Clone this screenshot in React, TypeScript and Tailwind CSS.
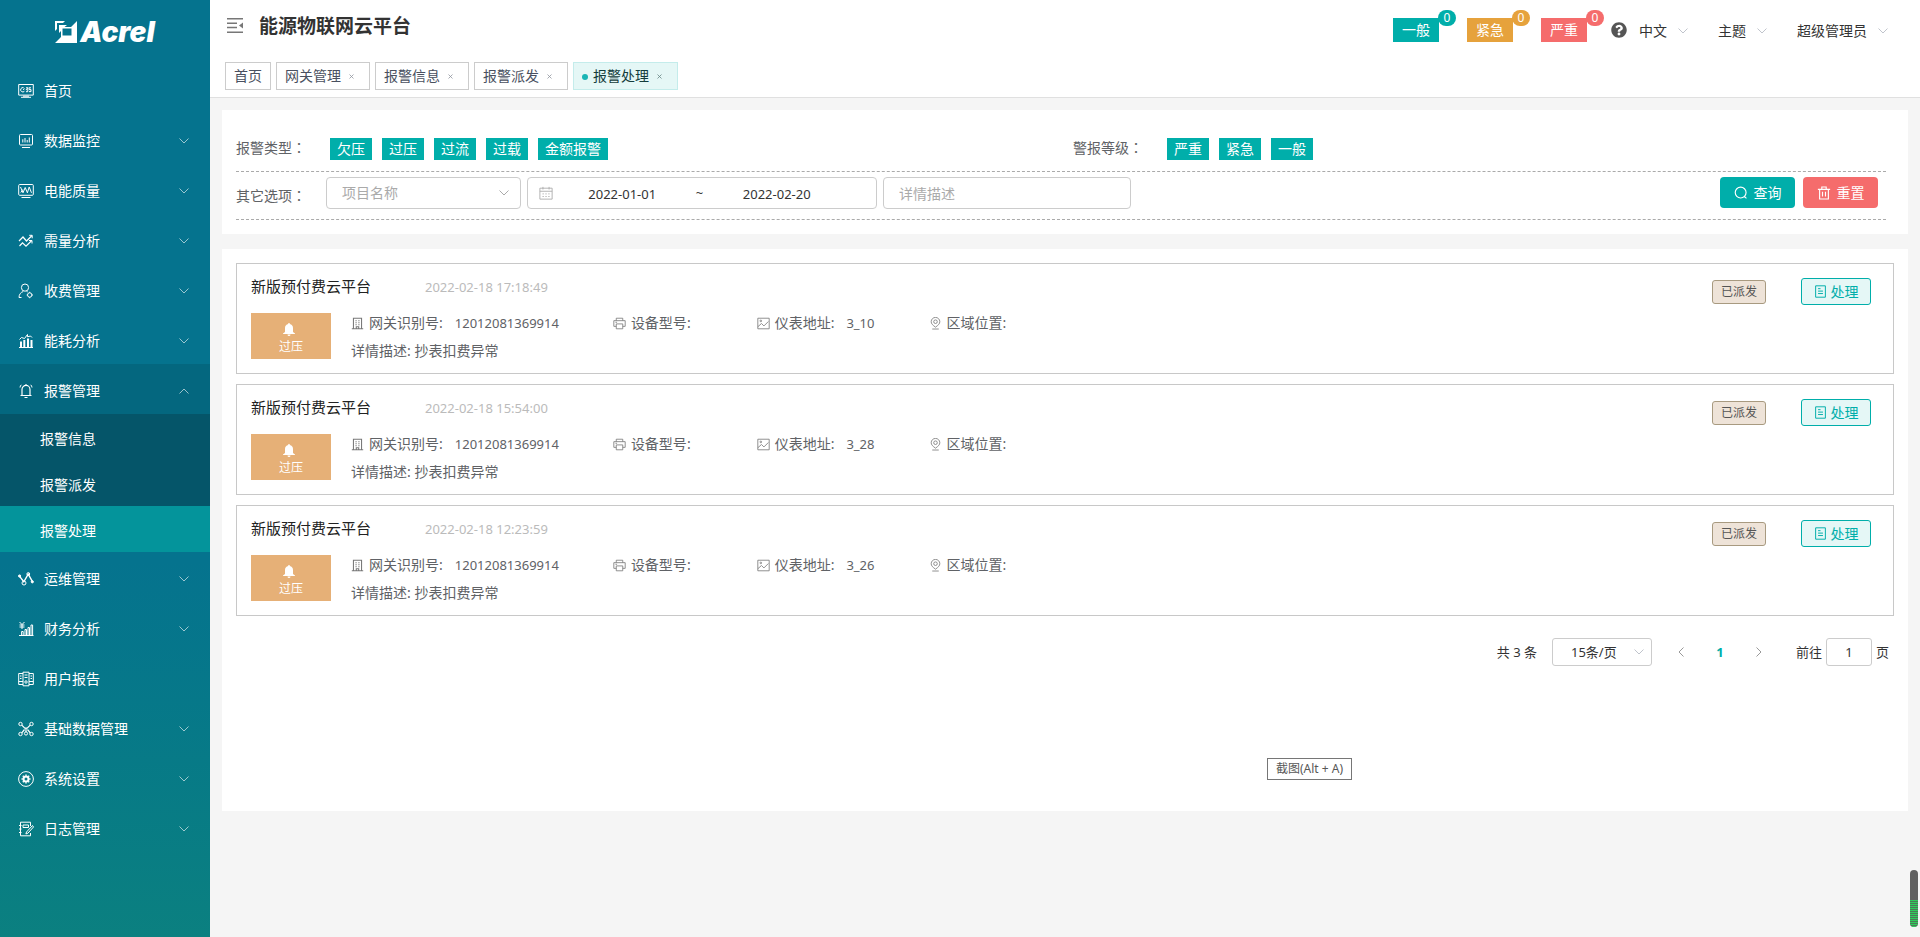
import type { ReactNode } from "react";
import { FaQuestionCircle } from "react-icons/fa";

const menu = [
    { label: "首页", icon: "home" },
    { label: "数据监控", icon: "monitor", more: true },
    { label: "电能质量", icon: "wave", more: true },
    { label: "需量分析", icon: "trend", more: true },
    { label: "收费管理", icon: "user", more: true },
    { label: "能耗分析", icon: "bars", more: true },
    { label: "报警管理", icon: "alarm", more: true, children: ["报警信息", "报警派发", "报警处理"] },
    { label: "运维管理", icon: "nodes", more: true },
    { label: "财务分析", icon: "finance", more: true },
    { label: "用户报告", icon: "report" },
    { label: "基础数据管理", icon: "network", more: true },
    { label: "系统设置", icon: "gear", more: true },
    { label: "日志管理", icon: "log", more: true },
];

const tabs = ["首页", "网关管理", "报警信息", "报警派发", "报警处理"];

const levels = [
    { label: "一般", color: "bg-[#00aeaa]" },
    { label: "紧急", color: "bg-[#e6a23c]" },
    { label: "严重", color: "bg-[#f56c6c]" },
];

const alarmTypes = ["欠压", "过压", "过流", "过载", "金额报警"];
const alarmLevels = ["严重", "紧急", "一般"];

const alarms = [
    { time: "2022-02-18 17:18:49", gateway: "12012081369914", address: "3_10" },
    { time: "2022-02-18 15:54:00", gateway: "12012081369914", address: "3_28" },
    { time: "2022-02-18 12:23:59", gateway: "12012081369914", address: "3_26" },
];

const icons: Record<string, ReactNode> = {
    home: (
        <>
            <path d="M.7 1.5h14.6v10.6H.7zM3 14.300h10M5 13.200h6" />
            <path d="M5.600 4.700a2.200 2.200 0 1 0 .8 3.600M5 6.700l1.600-1M8 4.800h2L8.200 6.700h1.600v2H8M13 4.800h-2v1.800h2v2h-2" />
        </>
    ),
    monitor: (
        <>
            <rect x="1.5" y="1.500" width="13" height="10.500" rx="1" />
            <path d="M4.800 9.500V6.300M7 9.500V5M9.200 9.500V7M11.300 9.500V4.500M4 14.500h8" />
        </>
    ),
    wave: (
        <>
            <rect x=".7" y="1.500" width="14.600" height="10.800" rx="1" />
            <path d="M2.500 4 5 9.800l2.200-5.300 2.200 5.300L11.200 4l2.300 5.800M2.800 9.500l2-3M3.500 14.500h9" />
        </>
    ),
    trend: (
        <>
            <path d="m1 8 4-4 3.500 4L14 2.500M1.500 13l3-3.200L8 13.200l5.500-5.400" strokeWidth="1.200" />
            <path d="M11.200 2.300h3v3M11 7.500h3v3" />
        </>
    ),
    user: (
        <>
            <circle cx="7" cy="4.600" r="3.600" />
            <path d="M1 14.500c0-3 1.800-5.300 4.300-6M8.500 8.300l1.200.6M1 14.500h2.500" />
            <circle cx="11.700" cy="12" r="2.200" />
            <path d="M11.700 8.800v1M11.700 14.200v1M8.700 12h.8M13.900 12h1" />
        </>
    ),
    bars: (
        <>
            <path d="M1 14.500h14" />
            <path d="M3 14V8.500M6.300 14V7M10 14V5.500M13.500 14V7" strokeWidth="2" />
            <path d="m1.500 6.500 2-2 3 1L9.500 1.500v2.300l3-.8 1.500 1.500" />
        </>
    ),
    alarm: (
        <>
            <path d="M4 12.300V6.400a4 4 0 0 1 8 0v5.900M2.500 12.500h11M6.500 14.500h3M8 1v1.300" strokeWidth="1.200" />
            <path d="M3.300 1.800A4 4 0 0 0 2 4.500M12.700 1.800A4 4 0 0 1 14 4.500" />
        </>
    ),
    nodes: (
        <>
            <path d="m1.800 5.600 4 5.200 4.400-7.600 4 7" strokeWidth="1.400" />
            <circle cx="1.600" cy="5" r="1.100" fill="currentColor" />
            <circle cx="6" cy="12" r="2" />
            <circle cx="10.300" cy="3" r="1.400" />
            <circle cx="14.300" cy="10.800" r="1.100" fill="currentColor" />
        </>
    ),
    finance: (
        <>
            <path d="m1.500 1 2.500 2.500L6.500 1M4 3.500V8M1.500 4h5M1.500 6h5M1 14.500h14.500" />
            <path d="M3.600 14v-3.500h1.600V14M7 14V8.500h1.500V14M10 14V6.500h1.500V14M13 14V4h1.600v10" />
        </>
    ),
    report: (
        <>
            <path d="M5 1.200h6v13.600H5zM5 2.500H.7v11H5M11 2.500h4.300v11H11" />
            <path d="M2 5h1.500M2 7.500h1.500M6.500 4h3M6.500 6.500h3M12.500 5H14M12.500 7.500H14M.7 10.500H5M11 10.500h4.300" />
            <circle cx="8" cy="11" r="1.200" />
        </>
    ),
    network: (
        <>
            <circle cx="2.500" cy="3" r="1.700" />
            <circle cx="13.500" cy="3" r="1.700" />
            <circle cx="2.500" cy="13" r="1.700" />
            <circle cx="13.500" cy="13" r="1.700" />
            <circle cx="8" cy="12.500" r="1.600" />
            <path d="m3.800 4.200 3 3h2.400l3-3M3.800 11.800 6.500 8.500M12.200 11.800 9.500 8.500M8 7.500V11" strokeWidth="1.200" />
        </>
    ),
    gear: (
        <>
            <circle cx="8" cy="8" r="7.400" />
            <circle cx="8" cy="8" r="2.500" strokeWidth="2" />
            <path d="M8 3.500v1.300M8 11.200v1.300M3.500 8h1.300M11.200 8h1.300M4.800 4.800l1 1M10.200 10.200l1 1M4.800 11.200l1-1M10.200 5.800l1-1" strokeWidth="1.500" />
        </>
    ),
    log: (
        <>
            <path d="M12.500 5V1.200h-10v13.600h10V12M1 4.500h2.500M1 8h2.500M1 11.500h2.500M5 4h5.500v2.500H5z" />
            <path d="m14.500 4.500-6 6.500-.6 2 2-.8 5.600-6.200z" />
        </>
    ),
    gateway: <path d="M3 1.500h10v13H3zM1 14.500h14M5.500 4.500h1.500M9 4.500h1.500M5.500 7h1.500M9 7h1.500M5.500 9.500h1.500M9 9.500h1.500M6.500 14.500V12h3v2.500" strokeWidth="1.300" />,
    printer: <path d="M4 4.500v-3h8v3M4 11.500H1v-7h14v7h-3M4 8.500h8v6H4zM3 6.500h2" />,
    picture: (
        <>
            <path d="M1 1.500h14v13H1zM1 12l4.500-4 3 3L14 5.500" />
            <circle cx="4.700" cy="4.800" r="1" />
        </>
    ),
    pin: (
        <>
            <path d="M8 12.500C4.500 10 2.700 8.300 2.700 5.800a5.300 5.300 0 0 1 10.600 0C13.300 8.300 11.500 10 8 12.500zM4 14.800h8" />
            <circle cx="8" cy="5.800" r="2.200" />
        </>
    ),
    calendar: <path d="M1 2.500h14v12.500H1zM1 6h14M4.500 1v3M11.500 1v3M4 9h1.500M7.300 9h1.500M10.600 9h1.500M4 12h1.500M7.300 12h1.500M10.600 12h1.500" />,
    search: <path d="m11.600 11.600 2.600 2.600M13.800 7.500a6.200 6.200 0 1 1-12.400 0 6.200 6.200 0 0 1 12.400 0z" strokeWidth="1.300" />,
    trash: <path d="M1 3.800h14M5.500 3.500V1.200h5v2.300M3 4v10.800h10V4M6.300 6.500v5.500M9.700 6.500v5.500" strokeWidth="1.300" />,
    doc: <path d="M2 1h12v14H2zM5 4.500h3M5 7.500h6M5 10.500h6" strokeWidth="1.200" />,
};

const Icon = ({ name, className = "size-4" }: { name: string; className?: string }) => (
    <svg viewBox="0 0 16 16" fill="none" stroke="currentColor" className={"shrink-0 " + className} aria-hidden="true">
        {icons[name]}
    </svg>
);

const Chevron = ({ className = "" }: { className?: string }) => (
    <svg viewBox="0 0 10 6" fill="none" stroke="currentColor" className={"w-[10px] h-[6px] shrink-0 " + className} aria-hidden="true">
        <path d="m.5.5 4.500 4.500L9.500.5" />
    </svg>
);

// full-width colon, centred in its cell
const Colon = () => <span className="font-['Noto_Sans_CJK_TC',sans-serif]">：</span>;

const Sidebar = () => (
    <aside className="w-[210px] shrink-0 text-white bg-linear-to-b from-[#05738e] from-60% to-[#0b8080]">
        <a href="#home" className="flex h-16 items-center justify-center gap-[3px]" aria-label="Acrel">
            <svg viewBox="0 0 22 22" className="size-[22px]" fill="currentColor" aria-hidden="true">
                <path d="M0 0h10L8 2H2v6L0 10zM4 4h8l-2.500 2H6v4l-2 2z" />
                <path fillRule="evenodd" d="M22 0v22H0l6-6V6h10zM7.500 7.500v7h9v-7z" />
            </svg>
            <span className="font-['Inter'] text-[28px] leading-8 font-black italic">Acrel</span>
        </a>
        <nav>
            {menu.map((item) => (
                <div key={item.label}>
                    <a
                        href={"#" + item.icon}
                        className={"flex h-[50px] items-center gap-[10px] pt-1 pl-[18px] pr-[21px] " + (item.children ? "bg-black/10" : "")}
                    >
                        <Icon name={item.icon} />
                        <span className="flex-1">{item.label}</span>
                        {item.more && <Chevron className={item.children ? "rotate-180 opacity-60" : "opacity-60"} />}
                    </a>
                    {item.children?.map((child) => (
                        <a
                            key={child}
                            href={"#" + child}
                            className={"flex h-[46px] items-center pt-1 pl-10 " + (child === "报警处理" ? "bg-[#04949b]" : "bg-[#055569]")}
                        >
                            {child}
                        </a>
                    ))}
                </div>
            ))}
        </nav>
    </aside>
);

const Header = () => (
    <header className="flex flex-col border-b border-[#e0e0e0] bg-white">
        <div className="flex h-[62px] items-start pt-3 pl-[17px] pr-8">
            <button type="button" aria-label="收起菜单" className="mt-[6px] text-[#777]">
                <svg viewBox="0 0 16 16" className="size-4" fill="currentColor" aria-hidden="true">
                    <path d="M0 0h16v1.500H0zM0 4.500h10V6H0zM0 8.800h10v1.500H0zM0 13.500h16V15H0zM16 4.500v6l-4-3z" />
                </svg>
            </button>
            <h1 className="ml-4 text-[19px] leading-7 font-bold text-[#333]">能源物联网云平台</h1>
            <div className="ml-auto flex items-center pt-[6px]">
                {levels.map((level) => (
                    <button
                        key={level.label}
                        type="button"
                        className={"relative mr-7 h-6 w-[46px] leading-6 text-white " + level.color}
                    >
                        {level.label}
                        <span className={"absolute -top-2 left-[45px] h-4 w-[18px] rounded-full text-xs leading-4 " + level.color}>0</span>
                    </button>
                ))}
                <FaQuestionCircle className="-ml-1 size-4 text-[#555]" />
                <button type="button" className="ml-3 flex items-center gap-[11px] pt-[2px] text-[#333]">
                    中文<Chevron className="text-[#c0c4cc]" />
                </button>
                <button type="button" className="ml-[30px] flex items-center gap-[11px] pt-[2px] text-[#333]">
                    主题<Chevron className="text-[#c0c4cc]" />
                </button>
                <button type="button" className="ml-[30px] flex items-center gap-[11px] pt-[2px] text-[#333]">
                    超级管理员<Chevron className="text-[#c0c4cc]" />
                </button>
            </div>
        </div>
        <nav className="flex gap-[5px] pb-[7px] pl-[15px]">
            {tabs.map((tab, index) => {
                const active = tab === "报警处理";
                return (
                    <a
                        key={tab}
                        href={"#tab" + index}
                        className={
                            "flex h-7 items-center border px-2 " +
                            (active ? "border-[#c4eceb] bg-[#e5f7f6] text-[#143c3c]" : "border-[#ccc] text-[#495060]")
                        }
                    >
                        {active && <span className="mt-[2px] mr-[5px] size-[6px] rounded-full bg-[#19b5b5]" />}
                        {tab}
                        {index > 0 && (
                            <svg viewBox="0 0 5 5" className="mr-[7px] ml-2 size-[5px]" stroke="currentColor" opacity="0.6" aria-hidden="true">
                                <path d="m.5.5 4 4m0-4-4 4" strokeWidth="0.8" />
                            </svg>
                        )}
                    </a>
                );
            })}
        </nav>
    </header>
);

const TagRow = ({ label, tags }: { label: string; tags: string[] }) => (
    <div className="flex">
        <span className="w-[94px] leading-[18px]">{label}<Colon /></span>
        <div className="flex gap-[10px]">
            {tags.map((tag) => (
                <button key={tag} type="button" className="h-[22px] bg-[#00aeaa] px-[7px] leading-[22px] text-white">
                    {tag}
                </button>
            ))}
        </div>
    </div>
);

const Filters = () => (
    <section className="bg-white pt-7 pr-[22px] pb-[14px] pl-[14px] text-[#606266]">
        <div className="grid grid-cols-2 border-b border-dashed border-[#aaa] pb-[11px]">
            <TagRow label="报警类型" tags={alarmTypes} />
            <div className="pl-3">
                <TagRow label="警报等级" tags={alarmLevels} />
            </div>
        </div>
        <form className="flex items-start border-b border-dashed border-[#aaa] pt-[5px] pr-2 pb-[10px]" onSubmit={(e) => e.preventDefault()}>
            <label htmlFor="project" className="h-8 w-[90px] leading-9">其它选项<Colon /></label>
            <div className="relative">
                <select id="project" className="h-8 w-[195px] appearance-none rounded border border-[#ccc] bg-white pl-[15px] text-[#aaa]">
                    <option>项目名称</option>
                </select>
                <Chevron className="pointer-events-none absolute top-[13px] right-3 text-[#aaa]" />
            </div>
            <div className="ml-[6px] flex h-8 w-[350px] items-center rounded border border-[#ccc] pr-[30px] pl-[11px] text-[13px]">
                <Icon name="calendar" className="size-[14px] text-[#aaa]" />
                <input aria-label="开始日期" defaultValue="2022-01-01" className="w-0 flex-1 pt-[2px] text-center text-[#333]" />
                <span className="w-4 text-center text-[#333]">~</span>
                <input aria-label="结束日期" defaultValue="2022-02-20" className="w-0 flex-1 pt-[2px] text-center text-[#333]" />
            </div>
            <input
                aria-label="详情描述"
                placeholder="详情描述"
                className="ml-[6px] h-8 w-[248px] rounded border border-[#ccc] px-[15px] placeholder:text-[#aaa]"
            />
            <button type="submit" className="ml-auto flex h-[31px] w-[75px] items-center justify-center gap-[6px] rounded bg-[#00aeaa] text-white">
                <Icon name="search" className="size-[14px]" />查询
            </button>
            <button type="reset" className="ml-2 flex h-[31px] w-[75px] items-center justify-center gap-[6px] rounded bg-[#f56c6c] text-white">
                <Icon name="trash" className="size-[14px]" />重置
            </button>
        </form>
    </section>
);

const Field = ({ icon, label, value }: { icon: string; label: string; value?: string }) => (
    <div className="flex items-center">
        <Icon name={icon} className="mr-[5px] size-[13px] text-[#777]" />
        <span>{label}:</span>
        <span className="ml-3 text-[13px]">{value}</span>
    </div>
);

const AlarmCard = ({ alarm }: { alarm: (typeof alarms)[number] }) => (
    <article className="flex items-start border border-[#c8c8c8] px-[14px] pt-[14px] pb-3">
        <div>
            <div className="flex h-[18px] items-center">
                <h2 className="w-[174px] text-[15px] text-[#222]">新版预付费云平台</h2>
                <time className="text-[13px] text-[#bbb]">{alarm.time}</time>
            </div>
            <div className="mt-[17px] flex">
                <div className="flex h-[46px] w-20 flex-col items-center bg-[#e6b077] pt-[10px] text-xs leading-[22px] text-white">
                    <svg viewBox="0 0 12 13" className="mr-1 h-[13px] w-3 shrink-0" fill="currentColor" aria-hidden="true">
                        <path d="M5.300 0h1.400v1C8.900 1.400 10 3 10 5v4l2 1.500v.5H0v-.5L2 9V5c0-2 1.100-3.600 3.300-4zM4.500 11.500h3a1.500 1.500 0 0 1-3 0z" />
                    </svg>
                    过压
                </div>
                <div className="ml-5 text-[#606266]">
                    <div className="flex h-5 items-center gap-[54px]">
                        <Field icon="gateway" label="网关识别号" value={alarm.gateway} />
                        <Field icon="printer" label="设备型号" />
                        <Field icon="picture" label="仪表地址" value={alarm.address} />
                        <Field icon="pin" label="区域位置" />
                    </div>
                    <p className="mt-2 leading-5">详情描述: 抄表扣费异常</p>
                </div>
            </div>
        </div>
        <span className="mt-[2px] ml-auto h-6 w-[54px] rounded-[3px] border border-[#a89a80] bg-[#eee3d8] text-center text-xs leading-[22px] text-[#555]">
            已派发
        </span>
        <button
            type="button"
            className="mr-2 ml-[35px] flex h-[27px] w-[70px] items-center justify-center gap-1 rounded-[3px] border border-[#00aeaa] bg-[#e5f7f6] text-[#00aeaa]"
        >
            <Icon name="doc" className="size-[13px]" />处理
        </button>
    </article>
);

const Pagination = () => (
    <div className="mt-[22px] flex h-7 items-center justify-end pr-[5px] text-[13px] text-[#333]">
        <span>共 3 条</span>
        <div className="relative ml-[15px]">
            <select aria-label="每页条数" className="h-7 w-[100px] appearance-none rounded-[3px] border border-[#ccc] bg-white pl-[18px]">
                <option>15条/页</option>
            </select>
            <Chevron className="pointer-events-none absolute top-[11px] right-2 text-[#c0c4cc]" />
        </div>
        <button type="button" aria-label="上一页" className="ml-6 text-[#999]">
            <Chevron className="rotate-90" />
        </button>
        <button type="button" className="ml-7 w-3 font-bold text-[#00aeaa]">1</button>
        <button type="button" aria-label="下一页" className="ml-7 text-[#999]">
            <Chevron className="-rotate-90" />
        </button>
        <label htmlFor="page" className="ml-8">前往</label>
        <input id="page" defaultValue="1" className="mx-1 h-7 w-[46px] rounded-[3px] border border-[#ccc] text-center" />
        <span>页</span>
    </div>
);

const App = () => {
    return (
        <div className="flex min-h-screen bg-[#f5f5f5] font-['Noto_Sans','Noto_Sans_CJK_SC',sans-serif] text-sm">
            <Sidebar />
            <div className="min-w-0 flex-1">
                <Header />
                <main className="px-3 pt-3">
                    <Filters />
                    <section className="relative mt-[15px] min-h-[60vh] bg-white p-[14px]">
                        <div className="flex flex-col gap-[10px]">
                            {alarms.map((alarm) => (
                                <AlarmCard key={alarm.time} alarm={alarm} />
                            ))}
                        </div>
                        <Pagination />
                        <div role="tooltip" className="absolute right-[556px] bottom-[31px] h-[22px] w-[85px] border border-[#767676] bg-white text-center text-xs leading-5 text-[#575757]">
                            截图(Alt + A)
                        </div>
                    </section>
                </main>
            </div>
            {/* floating battery-style meter in the corner */}
            <div className="fixed right-[2px] bottom-[10px] flex h-[57px] w-2 flex-col justify-end overflow-hidden rounded-full bg-[#606060]">
                <div className="h-[27px] bg-[repeating-linear-gradient(#2ecc5b_0_1px,#4b7a57_1px_2px)]" />
            </div>
        </div>
    );
};

export default App;
